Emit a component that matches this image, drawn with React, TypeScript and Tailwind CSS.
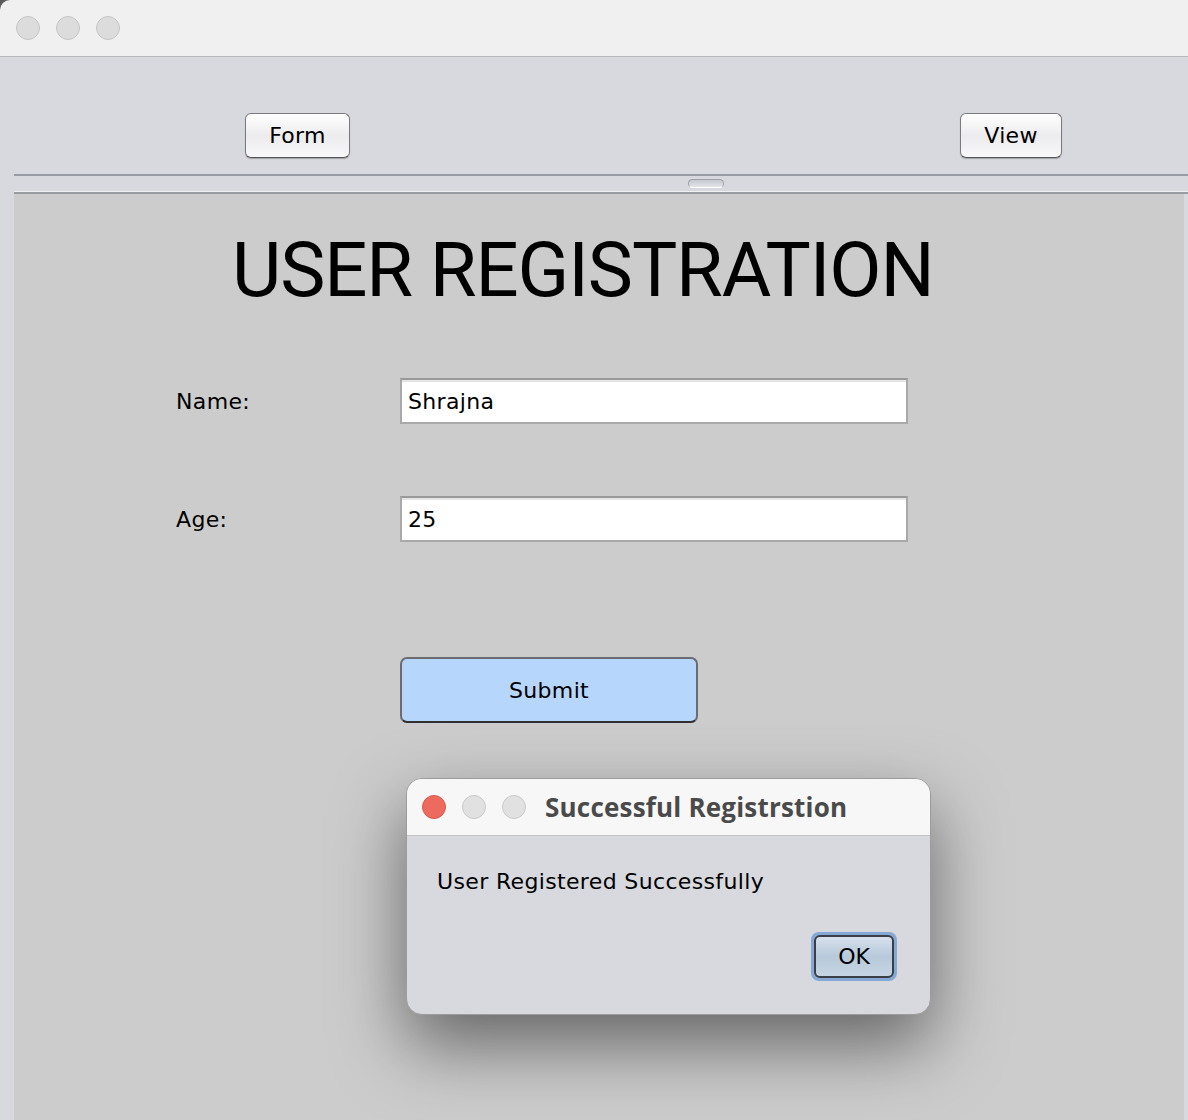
const body = { fontFamily: '"DejaVu Sans", "Liberation Sans", sans-serif' }

function Light({ color = "bg-[#dcdcdc] border-[#c6c6c6]" }: { color?: string }) {
  return <div className={`h-[24px] w-[24px] rounded-full border ${color}`} />
}

function AquaButton({ label, className }: { label: string; className: string }) {
  return (
    <button
      className={`flex items-center justify-center rounded-[6px] border border-[#7b7b7f] border-b-[#555559] bg-gradient-to-b from-[#ffffff] via-[#ececee] to-[#f8f8fa] text-[22px] tracking-[0.3px] text-black shadow-[0_1px_1px_rgba(0,0,0,0.25)] ${className}`}
      style={body}
    >
      {label}
    </button>
  )
}

function Field({ label, value, top }: { label: string; value: string; top: string }) {
  return (
    <div className={`flex items-center ${top}`}>
      <div className="w-[386px] shrink-0 pl-[162px] text-[22px] tracking-[0.35px] text-black" style={body}>
        {label}
      </div>
      <div
        className="flex h-[46px] w-[508px] items-center border-2 border-[#a9a9a9] border-t-[#9a9a9a] bg-white pl-[6px] text-[22px] tracking-[0.35px] text-black shadow-[inset_0_2px_0_#e4e4e4]"
        style={body}
      >
        {value}
      </div>
    </div>
  )
}

export default function App() {
  return (
    <div className="relative h-[1120px] w-[1188px] overflow-hidden bg-[#5b5b5b]">
      {/* title bar */}
      <div className="flex h-[57px] items-center gap-[16px] rounded-tl-[10px] border-b border-[#b9b9bb] bg-[#f0f0f0] pl-[16px]">
        <Light />
        <Light />
        <Light />
      </div>

      {/* top panel */}
      <div className="flex h-[117px] items-start bg-[#d8d9de] pt-[56px]">
        <AquaButton label="Form" className="ml-[245px] h-[45px] w-[105px]" />
        <AquaButton label="View" className="ml-[610px] h-[45px] w-[102px]" />
      </div>

      {/* split area */}
      <div className="flex h-[946px] bg-[#d8d9de]">
        <div className="w-[14px]" />
        <div className="flex flex-1 flex-col">
          <div className="h-[2px] bg-[#979ba2]" />
          <div className="flex h-[16px] items-center border-b border-b-[#eef0f2]">
            <div className="ml-[674px] h-[9px] w-[36px] rounded-full border border-[#9da1a8] border-b-white bg-gradient-to-b from-[#c5c8ce] to-[#e2e4e8]" />
          </div>
          <div className="h-[2px] bg-[#979ba2]" />
          <div className="mr-[4px] flex flex-1 flex-col bg-[#cccccc]">
            <div
              className="mt-[31px] pl-[218px] text-[76px] leading-[90px] tracking-[-1.1px] text-black"
              style={{ fontFamily: 'Roboto, "Liberation Sans", sans-serif' }}
            >
              USER REGISTRATION
            </div>
            <Field label="Name:" value="Shrajna" top="mt-[63px]" />
            <Field label="Age:" value="25" top="mt-[72px]" />
            <button
              className="ml-[386px] mt-[115px] flex h-[66px] w-[298px] items-center justify-center rounded-[7px] border-2 border-[#6b6b70] border-b-[#2f2f33] bg-[#b6d6fb] text-[22px] tracking-[0.35px] text-black"
              style={body}
            >
              Submit
            </button>
          </div>
        </div>
      </div>

      {/* dialog */}
      <div className="absolute left-[406px] top-[778px] h-[237px] w-[525px] overflow-hidden rounded-[16px] border border-[#9c9c9e] bg-[#d8d9de] shadow-[0_30px_70px_rgba(0,0,0,0.5)]">
        <div className="flex h-[57px] items-center gap-[16px] border-b border-[#c4c4c6] bg-[#f7f7f7] pl-[15px]">
          <Light color="bg-[#ed6a5e] border-[#d9574c]" />
          <Light color="bg-[#e1e1e1] border-[#c9c9c9]" />
          <Light color="bg-[#e1e1e1] border-[#c9c9c9]" />
          <div
            className="ml-[3px] text-[26px] font-bold tracking-[0.2px] text-[#4a4a4a]"
            style={{ fontFamily: '"Open Sans", Inter, sans-serif' }}
          >
            Successful Registrstion
          </div>
        </div>
        <div className="pl-[30px] pt-[29px] text-[22px] tracking-[0.35px] text-black" style={body}>
          User Registered Successfully
        </div>
        <div className="flex justify-end pr-[33px] pt-[34px]">
          <div className="rounded-[8px] bg-[#86a8d4] p-[3px]">
            <button
              className="flex h-[43px] w-[80px] items-center justify-center rounded-[6px] border-2 border-[#3a3e46] bg-gradient-to-b from-[#d6e1ec] via-[#b7c9da] to-[#c6d5e3] text-[22px] text-black"
              style={body}
            >
              OK
            </button>
          </div>
        </div>
      </div>
    </div>
  )
}
